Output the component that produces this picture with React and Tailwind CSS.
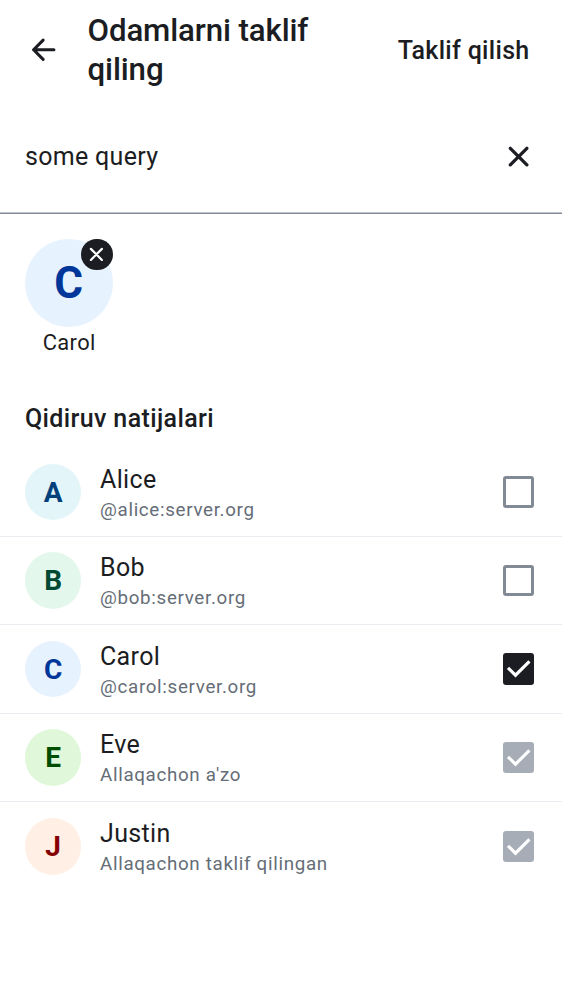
import React from "react";

const people = [
  { name: "Alice", detail: "@alice:server.org", tone: "bg-[#e3f5f8] text-[#00417b]", state: "off" },
  { name: "Bob", detail: "@bob:server.org", tone: "bg-[#e3f7ed] text-[#004933]", state: "off" },
  { name: "Carol", detail: "@carol:server.org", tone: "bg-[#e7f2ff] text-[#003699]", state: "on" },
  { name: "Eve", detail: "Allaqachon a'zo", tone: "bg-[#e0f8d9] text-[#004d00]", state: "locked" },
  { name: "Justin", detail: "Allaqachon taklif qilingan", tone: "bg-[#ffefe4] text-[#850000]", state: "locked" },
];

function CloseIcon({ className }) {
  return (
    <svg viewBox="0 0 24 24" fill="none" stroke="currentColor" strokeWidth="2.1" strokeLinecap="round" className={className}>
      <path d="M6.6 6.6 17.2 17.2M17.2 6.6 6.6 17.2" />
    </svg>
  );
}

function BackIcon() {
  return (
    <svg viewBox="0 0 24 24" fill="none" stroke="currentColor" strokeWidth="2" strokeLinecap="round" strokeLinejoin="round" className="size-[37.5px] shrink-0">
      <path d="M11.6 5.9 5.5 12 11.6 18.1M5.5 12H18.5" />
    </svg>
  );
}

function Checkbox({ state }) {
  if (state === "off") {
    return <span className="size-[31.25px] shrink-0 rounded-[3px] border-[3px] border-[#818a95]" />;
  }
  return (
    <span className={`flex size-[31.25px] shrink-0 rounded-[3px] text-white ${state === "on" ? "bg-[#1b1d22]" : "bg-[#a6adb7]"}`}>
      <svg viewBox="0 0 20 20" fill="none" stroke="currentColor" strokeWidth="2" className="size-full">
        <path d="M3.2 9.5 8 14.2 16.9 5.4" />
      </svg>
    </span>
  );
}

function PersonRow({ person, last }) {
  return (
    <li className={`flex h-[88.5px] items-center border-[#e9ecf0] pr-[28px] pl-[25px] ${last ? "" : "border-b"}`}>
      <span className={`flex size-[56.25px] shrink-0 items-center justify-center rounded-full pt-px text-[28px] font-bold ${person.tone}`}>
        {person.name[0]}
      </span>
      <div className="ml-[18.75px] min-w-0 grow pt-[2px]">
        <p className="text-[25px] leading-[34px] tracking-[0.35px]">{person.name}</p>
        <p className="text-[18.75px] leading-[27px] tracking-[0.68px] text-[#656d77]">{person.detail}</p>
      </div>
      <Checkbox state={person.state} />
    </li>
  );
}

export default function App() {
  return (
    <main className="min-h-[1000px] w-[562px] overflow-hidden bg-white font-['Roboto',sans-serif] text-[#1b1d22]">
      <header className="flex h-[100px] items-center pr-[32.5px] pl-[25px]">
        <BackIcon />
        <h1 className="ml-[25px] w-[260px] text-[31.25px] leading-[39px] font-medium tracking-[-0.12px]">Odamlarni taklif qiling</h1>
        <button className="mt-px ml-auto text-[25px] leading-[37.5px] font-medium tracking-[0.3px] whitespace-nowrap">Taklif qilish</button>
      </header>

      <div className="flex h-[114px] items-center justify-between border-b border-[#818a95] pr-[25px] pl-[25px] shadow-[inset_0_-1px_0_#c0c5cb]">
        <span className="text-[25px] leading-[37.5px] tracking-[0.3px]">some query</span>
        <CloseIcon className="size-[37.5px]" />
      </div>

      <section className="px-[25px] pt-[25px]">
        <div className="flex w-[87.5px] flex-col items-center">
          <div className="relative flex size-[87.5px] items-center justify-center rounded-full bg-[#e7f2ff] text-[44px] font-bold text-[#003699]">
            C
            <button aria-label="Carol" className="absolute top-0 right-0 flex size-[31.25px] items-center justify-center rounded-full bg-[#1b1d22] text-white">
              <CloseIcon className="size-[25px]" />
            </button>
          </div>
          <span className="pl-px text-[21.9px] leading-[31.25px] tracking-[0.4px]">Carol</span>
        </div>
      </section>

      <section>
        <h2 className="mt-[42px] h-[48.5px] px-[25px] text-[25px] leading-[37.5px] font-medium tracking-[0.37px]">Qidiruv natijalari</h2>
        <ul>
          {people.map((person, index) => (
            <PersonRow key={person.name} person={person} last={index === people.length - 1} />
          ))}
        </ul>
      </section>
    </main>
  );
}
